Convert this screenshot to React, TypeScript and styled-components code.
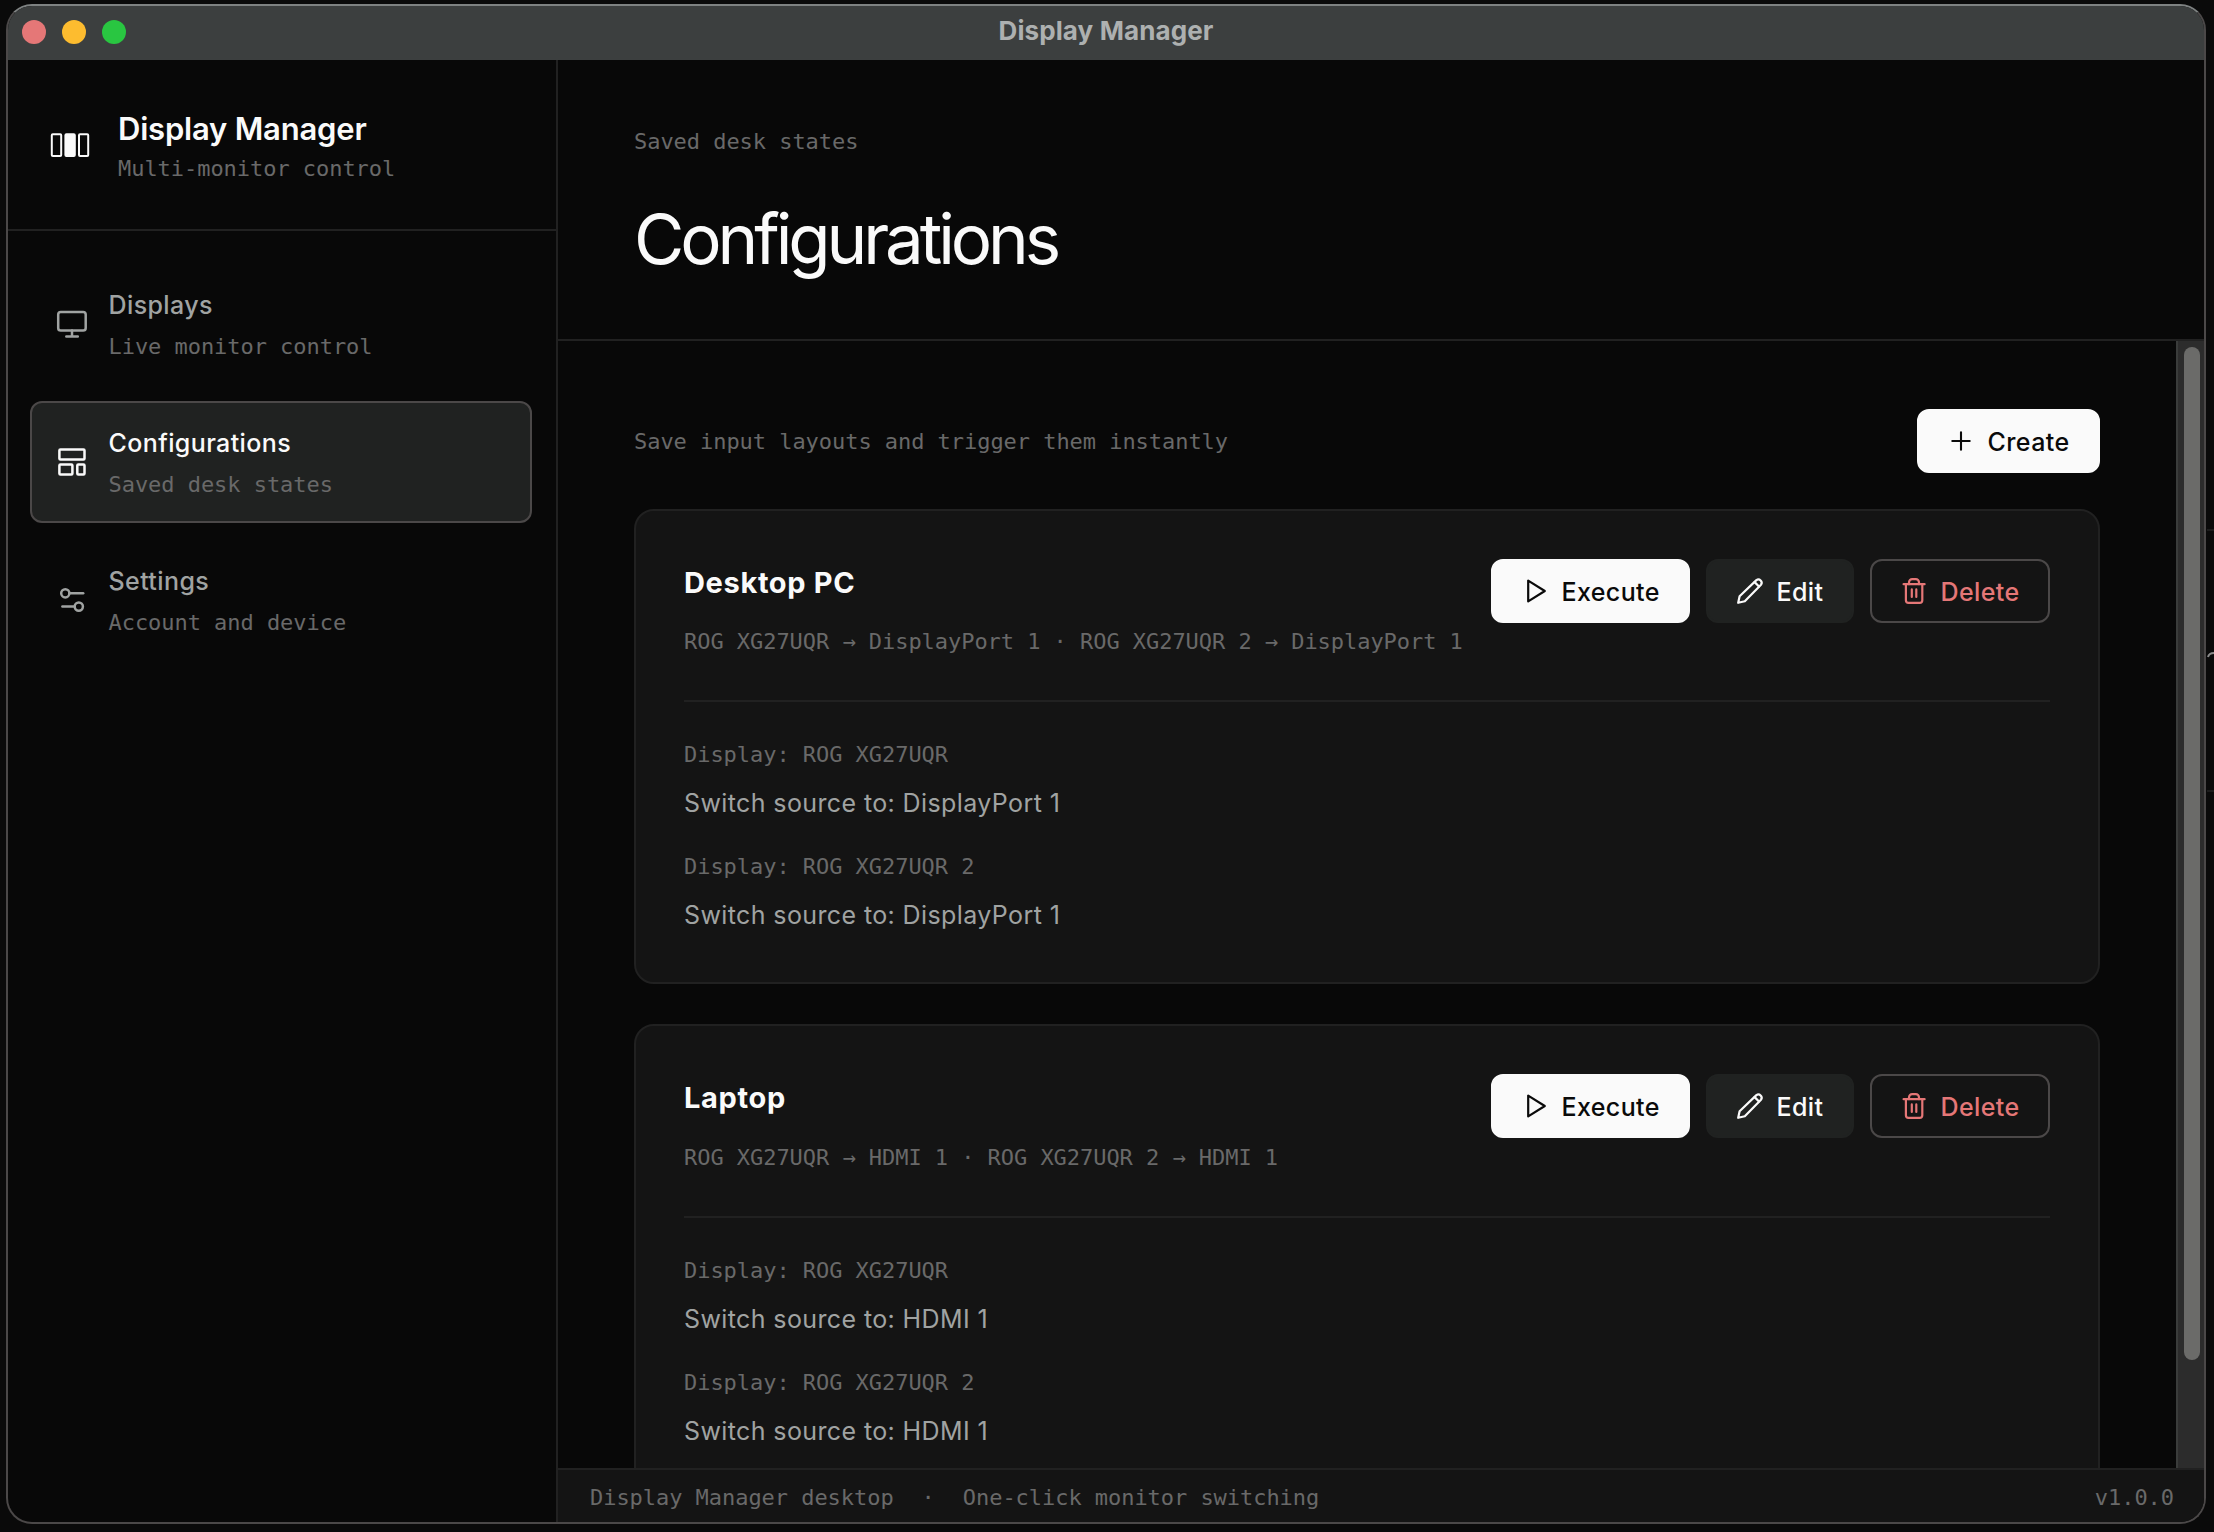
import React from "react";
import styled, { createGlobalStyle, css } from "styled-components";

const sans = `Inter, "Liberation Sans", sans-serif`;
const mono = `"DejaVu Sans Mono", "Liberation Mono", monospace`;

const color = {
  page: "#0a0a0a",
  surface: "#080808",
  card: "#141414",
  raised: "#202221",
  line: "#212121",
  edge: "#4b4848",
  bright: "#fafafa",
  soft: "#a0a3a2",
  muted: "#696969",
  danger: "#e57777",
};

const GlobalStyle = createGlobalStyle`
  * { box-sizing: border-box; }
  html, body { margin: 0; padding: 0; background: ${color.page}; overflow: hidden; }
  h1, h2, p { margin: 0; }
`;

const Desktop = styled.div`
  position: relative;
  width: 2214px;
  height: 1532px;
  padding: 4px 8px 8px 6px;
  background: ${color.page};
  font-family: ${sans};
  color: ${color.bright};
  overflow: hidden;
`;

/* Sliver of the window that sits behind this one. */
const BackWindow = styled.svg`
  position: absolute;
  top: 0;
  right: 0;
  width: 7px;
  height: 1532px;
`;

const Window = styled.div`
  width: 2200px;
  height: 1520px;
  display: flex;
  flex-direction: column;
  border: 2px solid ${color.edge};
  border-top-color: #7e8282;
  border-radius: 26px;
  overflow: hidden;
  background: ${color.surface};
`;

const TitleBar = styled.header`
  height: 54px;
  flex: none;
  display: grid;
  grid-template-columns: 1fr auto 1fr;
  align-items: center;
  padding: 0 14px;
  background: #3c3f3f;
`;

const Lights = styled.div`
  display: flex;
  gap: 16px;
  margin-top: -2px;
`;

const Light = styled.span<{ $fill: string }>`
  width: 24px;
  height: 24px;
  border-radius: 50%;
  background: ${(p) => p.$fill};
`;

const WindowTitle = styled.span`
  font-size: 26px;
  line-height: 32px;
  font-weight: 700;
  letter-spacing: 0.1px;
  margin-top: -4px;
  color: #adb0b0;
`;

const Body = styled.div`
  flex: 1;
  min-height: 0;
  display: flex;
`;

const Sidebar = styled.aside`
  width: 550px;
  flex: none;
  border-right: 2px solid ${color.line};
  display: flex;
  flex-direction: column;
`;

const Brand = styled.div`
  height: 171px;
  display: flex;
  align-items: flex-start;
  padding: 48px 24px 0 42px;
  border-bottom: 2px solid ${color.line};
`;

const LogoSlot = styled.div`
  width: 40px;
  height: 74px;
  margin-right: 28px;
  display: flex;
  align-items: center;
`;

const BrandText = styled.div`
  display: flex;
  flex-direction: column;
  gap: 2px;
`;

const BrandName = styled.h2`
  font-size: 31px;
  line-height: 42px;
  font-weight: 600;
  letter-spacing: -0.2px;
`;

const Mono = styled.p`
  font-family: ${mono};
  font-size: 22px;
  line-height: 32px;
  padding-top: 1px;
  margin-bottom: -1px;
  letter-spacing: -0.045px;
  color: ${color.muted};
  white-space: pre;
`;

const Nav = styled.nav`
  display: flex;
  flex-direction: column;
  gap: 16px;
  padding: 32px 24px 0 22px;
`;

const NavItem = styled.a<{ $active?: boolean }>`
  height: 122px;
  display: flex;
  align-items: center;
  gap: 18.5px;
  padding: 0 22px;
  border: 2px solid transparent;
  border-radius: 12px;
  color: ${color.soft};
  ${(p) =>
    p.$active &&
    css`
      background: ${color.raised};
      border-color: ${color.edge};
      color: ${color.bright};
    `}
`;

const NavText = styled.div`
  display: flex;
  flex-direction: column;
  gap: 8px;
  padding-top: 2px;
`;

const NavLabel = styled.span`
  font-size: 25px;
  line-height: 34px;
  font-weight: 500;
  letter-spacing: 0.4px;
`;

const Main = styled.main`
  flex: 1;
  min-width: 0;
  display: flex;
  flex-direction: column;
`;

const PageHeader = styled.header`
  height: 281px;
  flex: none;
  padding: 65px 76px 0;
  border-bottom: 2px solid ${color.line};
`;

const PageTitle = styled.h1`
  margin-top: 42px;
  font-size: 69px;
  line-height: 80px;
  font-weight: 400;
  letter-spacing: -4.1px;
`;

const ScrollArea = styled.div`
  flex: 1;
  min-height: 0;
  display: flex;
`;

const Content = styled.section`
  flex: 1;
  min-width: 0;
  overflow: hidden;
  padding: 68px 76px 0;
`;

const Scrollbar = styled.div`
  width: 28px;
  flex: none;
  padding: 6px 4px 0 6px;
  background: #2c2c2c;
  border-left: 2px solid #3a3c3b;
`;

const Thumb = styled.div`
  width: 16px;
  height: 1013px;
  border-radius: 8px;
  background: #6b6b69;
`;

const Toolbar = styled.div`
  display: flex;
  align-items: center;
  justify-content: space-between;
  margin-bottom: 35.6px;
`;

const Button = styled.button<{ $kind: "primary" | "secondary" | "danger"; $width: number }>`
  height: 64px;
  width: ${(p) => p.$width}px;
  padding: 0 26px;
  display: flex;
  align-items: center;
  gap: 10.5px;
  border: 2px solid transparent;
  border-radius: 12px;
  font-family: ${sans};
  font-size: 25px;
  font-weight: 500;
  line-height: 32px;
  white-space: nowrap;
  ${(p) =>
    p.$kind === "primary"
      ? css`
          background: ${color.bright};
          border-color: ${color.bright};
          color: ${color.page};
        `
      : p.$kind === "secondary"
        ? css`
            background: ${color.raised};
            border-color: ${color.raised};
            color: ${color.bright};
          `
        : css`
            background: transparent;
            border-color: ${color.edge};
            color: ${color.danger};
          `}
`;

const ButtonText = styled.span`
  padding-top: 2px;
  letter-spacing: 0.4px;
`;

const Icon = styled.svg<{ $size: number }>`
  width: ${(p) => p.$size}px;
  height: ${(p) => p.$size}px;
  flex: none;
  fill: none;
  stroke: currentColor;
  stroke-linecap: round;
  stroke-linejoin: round;
`;

const Card = styled.article`
  padding: 48px 48px 49.2px;
  margin-bottom: 40px;
  border: 2px solid ${color.line};
  border-radius: 20px;
  background: ${color.card};
`;

const CardHeader = styled.div`
  display: flex;
  justify-content: space-between;
  height: 143.8px;
  border-bottom: 2px solid ${color.line};
`;

const CardHeading = styled.div`
  display: flex;
  flex-direction: column;
  gap: 22.5px;
  padding-top: 4px;
`;

const CardTitle = styled.h2`
  font-size: 29px;
  line-height: 40px;
  font-weight: 700;
  letter-spacing: 0.65px;
`;

const Actions = styled.div`
  display: flex;
  gap: 16px;
`;

const Rules = styled.div`
  display: flex;
  flex-direction: column;
  gap: 27.2px;
  padding-top: 33.8px;
`;

const Rule = styled.div`
  display: flex;
  flex-direction: column;
  gap: 12.8px;
`;

const RuleLabel = styled(Mono)`
  line-height: 36px;
`;

const RuleValue = styled.p`
  font-size: 25px;
  line-height: 36px;
  letter-spacing: 0.39px;
  color: ${color.soft};
`;

const Footer = styled.footer`
  height: 54px;
  flex: none;
  display: flex;
  align-items: center;
  justify-content: space-between;
  padding: 2px 30px 0 32px;
  border-top: 2px solid ${color.line};
  background: ${color.card};
`;

const FooterInfo = styled.div`
  display: flex;
  gap: 28px;
`;

const Logo = () => (
  <svg width="40" height="26" viewBox="0 0 40 26" fill="none" stroke="currentColor" strokeWidth="2">
    <rect x="1.8" y="2.2" width="9.4" height="21.8" rx="1" />
    <rect x="15.4" y="2.2" width="9.4" height="21.8" rx="1" fill="currentColor" />
    <rect x="29" y="2.2" width="9.2" height="21.8" rx="1" />
  </svg>
);

const MonitorIcon = () => (
  <Icon $size={36} viewBox="0 0 36 36" strokeWidth="2.5">
    <rect x="4.2" y="5.9" width="27.5" height="18.7" rx="2.6" />
    <path d="M18 24.6v5.8M12.3 30.4h11.5" />
  </Icon>
);

const LayoutIcon = () => (
  <Icon $size={36} viewBox="0 0 36 36" strokeWidth="2.5">
    <rect x="5.4" y="5.5" width="25.1" height="10" rx="1" />
    <rect x="5.4" y="20.5" width="13" height="10" rx="1" />
    <rect x="23.3" y="20.5" width="7.2" height="10" rx="1" />
  </Icon>
);

const SlidersIcon = () => (
  <Icon $size={36} viewBox="0 0 36 36" strokeWidth="2.5">
    <circle cx="11.3" cy="11.3" r="4.1" />
    <path d="M15.5 11.3h13.7" />
    <circle cx="24.8" cy="24.6" r="4.1" />
    <path d="M20.6 24.6H8.4" />
  </Icon>
);

const PlusIcon = () => (
  <Icon $size={32} viewBox="0 0 32 32" strokeWidth="2.1">
    <path d="M16 7.3v17.4M7.3 16h17.4" />
  </Icon>
);

const PlayIcon = () => (
  <Icon $size={32} viewBox="0 0 32 32" strokeWidth="2.2">
    <path d="M9.2 5.6v20.8L25.8 16z" />
  </Icon>
);

const PencilIcon = () => (
  <Icon $size={32} viewBox="0 0 32 32" strokeWidth="2.2">
    <path d="M4.2 27.8l1.4-6.6L22.4 5.1a3.3 3.3 0 0 1 4.6 4.6L10.8 26.3z" />
    <path d="M20.6 7.1l4.4 4.4" />
  </Icon>
);

const TrashIcon = () => (
  <Icon $size={32} viewBox="0 0 32 32" strokeWidth="2.2">
    <path d="M5.6 9.2h21" />
    <path d="M11 9.2V7.4A3.2 3.2 0 0 1 14.2 4.2h3.6A3.2 3.2 0 0 1 21 7.4v1.8" />
    <path d="M7.9 9.2v16a2.6 2.6 0 0 0 2.6 2.6h11.2a2.6 2.6 0 0 0 2.6-2.6v-16" />
    <path d="M13.8 14.4v7.6M18.3 14.4v7.6" />
  </Icon>
);

const navItems = [
  { label: "Displays", hint: "Live monitor control", icon: <MonitorIcon /> },
  { label: "Configurations", hint: "Saved desk states", icon: <LayoutIcon />, active: true },
  { label: "Settings", hint: "Account and device", icon: <SlidersIcon /> },
];

const configs = [
  { name: "Desktop PC", source: "DisplayPort 1" },
  { name: "Laptop", source: "HDMI 1" },
];

const monitors = ["ROG XG27UQR", "ROG XG27UQR 2"];

export default function App() {
  return (
    <Desktop>
      <GlobalStyle />
      <BackWindow viewBox="0 0 7 1532" fill="none">
        <path d="M0 530h7M0 791h7" stroke="#1c1c1c" strokeWidth="2" />
        <path d="M1 657q1-4 6-4" stroke="#8a8a8a" strokeWidth="2" />
      </BackWindow>
      <Window>
        <TitleBar>
          <Lights>
            <Light $fill="#e57777" />
            <Light $fill="#fdbc2f" />
            <Light $fill="#29c641" />
          </Lights>
          <WindowTitle>Display Manager</WindowTitle>
          <span />
        </TitleBar>
        <Body>
          <Sidebar>
            <Brand>
              <LogoSlot>
                <Logo />
              </LogoSlot>
              <BrandText>
                <BrandName>Display Manager</BrandName>
                <Mono>Multi-monitor control</Mono>
              </BrandText>
            </Brand>
            <Nav>
              {navItems.map((item) => (
                <NavItem key={item.label} $active={item.active}>
                  {item.icon}
                  <NavText>
                    <NavLabel>{item.label}</NavLabel>
                    <Mono>{item.hint}</Mono>
                  </NavText>
                </NavItem>
              ))}
            </Nav>
          </Sidebar>
          <Main>
            <PageHeader>
              <Mono>Saved desk states</Mono>
              <PageTitle>Configurations</PageTitle>
            </PageHeader>
            <ScrollArea>
              <Content>
                <Toolbar>
                  <Mono>Save input layouts and trigger them instantly</Mono>
                  <Button $kind="primary" $width={183}>
                    <PlusIcon />
                    <ButtonText>Create</ButtonText>
                  </Button>
                </Toolbar>
                {configs.map((config) => (
                  <Card key={config.name}>
                    <CardHeader>
                      <CardHeading>
                        <CardTitle>{config.name}</CardTitle>
                        <Mono>{monitors.map((m) => `${m} → ${config.source}`).join(" · ")}</Mono>
                      </CardHeading>
                      <Actions>
                        <Button $kind="primary" $width={199}>
                          <PlayIcon />
                          <ButtonText>Execute</ButtonText>
                        </Button>
                        <Button $kind="secondary" $width={148}>
                          <PencilIcon />
                          <ButtonText>Edit</ButtonText>
                        </Button>
                        <Button $kind="danger" $width={180}>
                          <TrashIcon />
                          <ButtonText>Delete</ButtonText>
                        </Button>
                      </Actions>
                    </CardHeader>
                    <Rules>
                      {monitors.map((m) => (
                        <Rule key={m}>
                          <RuleLabel>{`Display: ${m}`}</RuleLabel>
                          <RuleValue>{`Switch source to: ${config.source}`}</RuleValue>
                        </Rule>
                      ))}
                    </Rules>
                  </Card>
                ))}
              </Content>
              <Scrollbar>
                <Thumb />
              </Scrollbar>
            </ScrollArea>
            <Footer>
              <FooterInfo>
                <Mono>Display Manager desktop</Mono>
                <Mono>·</Mono>
                <Mono>One-click monitor switching</Mono>
              </FooterInfo>
              <Mono>v1.0.0</Mono>
            </Footer>
          </Main>
        </Body>
      </Window>
    </Desktop>
  );
}
